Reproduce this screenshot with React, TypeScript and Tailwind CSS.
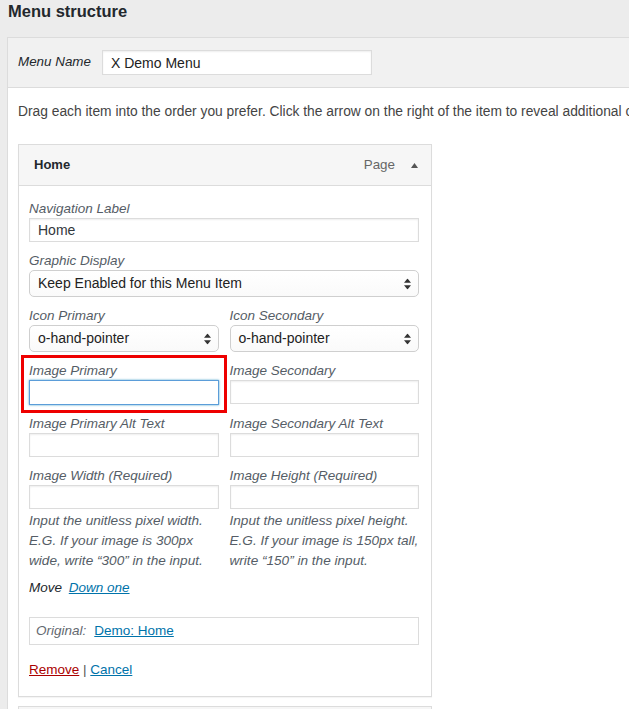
import React from 'react';

const textInput =
  'block h-[24px] w-full border border-[#dcdcdc] bg-white px-2 text-[14px] text-[#32373c] shadow-[inset_0_1px_2px_rgba(0,0,0,0.07)] outline-none';

const Label: React.FC<{ children: React.ReactNode }> = ({ children }) => (
  <div className="text-[13.5px] italic leading-[19px] text-[#555d66]">{children}</div>
);

const UpDown = () => (
  <svg width="7" height="11" viewBox="0 0 7 11" className="absolute right-[7px] top-1/2 -translate-y-1/2">
    <polygon points="3.5,0 7,4.3 0,4.3" fill="#333" />
    <polygon points="0,6.7 7,6.7 3.5,11" fill="#333" />
  </svg>
);

const FakeSelect: React.FC<{ value: string }> = ({ value }) => (
  <div className="relative flex h-[27px] w-full items-center rounded-[5px] border border-[#cfcfcf] bg-gradient-to-b from-white to-[#fafafa] pl-[8px] text-[14px] text-[#222]">
    {value}
    <UpDown />
  </div>
);

const App: React.FC = () => {
  return (
    <div className="h-[709px] w-[629px] overflow-hidden bg-[#ececec] font-['Liberation_Sans',Arial,sans-serif] text-[#23282d]">
      <h3 className="h-[37px] pl-[8px] text-[16.5px] font-bold leading-[22px]">Menu structure</h3>

      <div className="ml-[7px] w-[640px] border-l border-t border-[#dcdcdc] bg-white">
        {/* menu name bar */}
        <div className="flex h-[50px] items-center border-b border-[#dcdcdc] bg-[#f1f1f1] pl-[10px]">
          <span className="w-[84px] text-[13.4px] italic text-[#23282d]">Menu Name</span>
          <input
            readOnly
            value="X Demo Menu"
            className="h-[25px] w-[270px] border border-[#dcdcdc] bg-white px-[8px] text-[14px] text-[#222] shadow-[inset_0_1px_2px_rgba(0,0,0,0.07)] outline-none"
          />
        </div>

        <div className="pl-[10px] pt-[14px]">
          <p className="whitespace-nowrap text-[13.8px] leading-[19px] text-[#444]">
            Drag each item into the order you prefer. Click the arrow on the right of the item to reveal additional configuration options.
          </p>

          {/* menu item */}
          <div className="mt-[23px] w-[414px] border border-[#dcdcdc] shadow-[0_1px_1px_rgba(0,0,0,0.04)]">
            <div className="flex h-[41px] items-center border-b border-[#dcdcdc] bg-[#f6f6f6] pl-[15px] pr-[13px]">
              <span className="flex-1 text-[13px] font-bold text-[#23282d]">Home</span>
              <span className="text-[13.4px] text-[#666]">Page</span>
              <svg width="7" height="5" viewBox="0 0 7 5" className="ml-[16px]">
                <polygon points="3.5,0 7,5 0,5" fill="#555" />
              </svg>
            </div>

            <div className="flex flex-col gap-[9px] pb-[17px] pl-[10px] pr-[12px] pt-[13px]">
              <div>
                <Label>Navigation Label</Label>
                <input readOnly value="Home" className={textInput} />
              </div>

              <div>
                <Label>Graphic Display</Label>
                <FakeSelect value="Keep Enabled for this Menu Item" />
              </div>

              <div className="grid grid-cols-2 gap-x-[11px] gap-y-[9px]">
                <div>
                  <Label>Icon Primary</Label>
                  <FakeSelect value="o-hand-pointer" />
                </div>
                <div>
                  <Label>Icon Secondary</Label>
                  <FakeSelect value="o-hand-pointer" />
                </div>

                <div className="relative">
                  <Label>Image Primary</Label>
                  <input
                    readOnly
                    className="block h-[25px] w-full border border-[#5b9dd9] bg-white shadow-[0_0_2px_rgba(30,140,190,0.8)] outline-none"
                  />
                  {/* highlight frame */}
                  <div className="pointer-events-none absolute bottom-[-8px] left-[-8px] right-[-8px] top-[-6px] border-[3px] border-[#ee0000]" />
                </div>
                <div>
                  <Label>Image Secondary</Label>
                  <input readOnly className={textInput} />
                </div>

                <div>
                  <Label>Image Primary Alt Text</Label>
                  <input readOnly className={textInput} />
                </div>
                <div>
                  <Label>Image Secondary Alt Text</Label>
                  <input readOnly className={textInput} />
                </div>

                <div>
                  <Label>Image Width (Required)</Label>
                  <input readOnly className={textInput} />
                  <p className="mt-[2px] text-[13.6px] italic leading-[20px] text-[#555d66]">
                    Input the unitless pixel width. E.G. If your image is 300px wide, write “300” in the input.
                  </p>
                </div>
                <div>
                  <Label>Image Height (Required)</Label>
                  <input readOnly className={textInput} />
                  <p className="mt-[2px] text-[13.6px] italic leading-[20px] text-[#555d66]">
                    Input the unitless pixel height. E.G. If your image is 150px tall, write “150” in the input.
                  </p>
                </div>
              </div>

              <div className="mt-[-2px] text-[13.5px] italic leading-[19px] text-[#23282d]">
                Move <a className="ml-[3px] text-[#0073aa] underline">Down one</a>
              </div>

              <div className="mt-[11px] flex h-[28px] items-center border border-[#dcdcdc] px-[6px] text-[13.5px]">
                <span className="italic text-[#646970]">Original:</span>
                <a className="ml-[8px] text-[#0073aa] underline">Demo: Home</a>
              </div>

              <div className="mt-[6px] text-[13.5px] leading-[19px] text-[#555]">
                <a className="text-[#a00] underline">Remove</a> | <a className="text-[#0073aa] underline">Cancel</a>
              </div>
            </div>
          </div>

          <div className="mt-[9px] h-[40px] w-[414px] border border-[#dcdcdc] bg-[#f6f6f6]" />
        </div>
      </div>
    </div>
  );
};

export default App;
